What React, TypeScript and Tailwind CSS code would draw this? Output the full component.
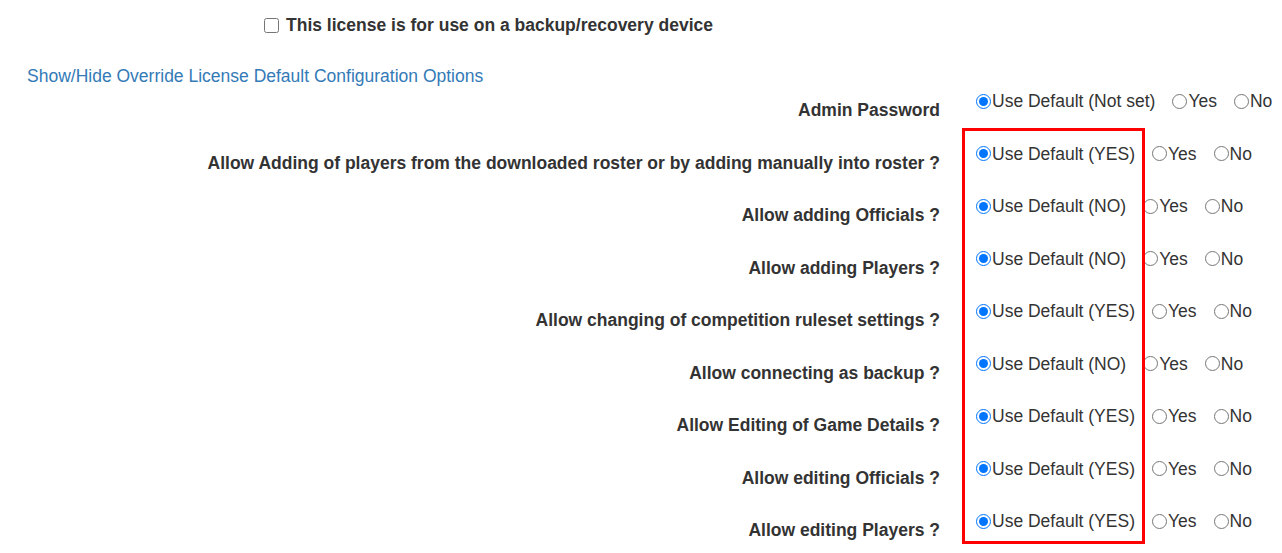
const rows: { label: string; def: string }[] = [
  { label: "Admin Password", def: "Not set" },
  { label: "Allow Adding of players from the downloaded roster or by adding manually into roster ?", def: "YES" },
  { label: "Allow adding Officials ?", def: "NO" },
  { label: "Allow adding Players ?", def: "NO" },
  { label: "Allow changing of competition ruleset settings ?", def: "YES" },
  { label: "Allow connecting as backup ?", def: "NO" },
  { label: "Allow Editing of Game Details ?", def: "YES" },
  { label: "Allow editing Officials ?", def: "YES" },
  { label: "Allow editing Players ?", def: "YES" },
];

function Radio({ name, checked, text }: { name: string; checked?: boolean; text: string }) {
  return (
    <label className="flex items-center">
      <input
        type="radio"
        name={name}
        defaultChecked={checked}
        className="m-0 mr-[1px] h-[15px] w-[15px]"
      />
      <span>{text}</span>
    </label>
  );
}

export default function App() {
  return (
    <div
      className="relative h-[553px] w-[1282px] overflow-hidden bg-white text-[17.5px] leading-[20px] text-[#333]"
      style={{ fontFamily: '"Liberation Sans", Arial, sans-serif' }}
    >
      <div className="flex items-center pl-[264px] pt-[15px]">
        <input type="checkbox" className="m-0 mr-[7px] h-[15px] w-[15px]" />
        <span className="font-bold">This license is for use on a backup/recovery device</span>
      </div>

      <div className="pl-[27px] pt-[31px]">
        <a href="#" className="text-[#337ab7]">
          Show/Hide Override License Default Configuration Options
        </a>
      </div>

      <div className="pt-[5px]">
        {rows.map((r, i) => (
          <div key={i} className="flex h-[52.5px] items-start">
            <div className="w-[940px] pt-[9px] text-right font-bold">{r.label}</div>
            <div className="flex gap-[17px] pl-[36px]">
              <Radio name={"r" + i} checked text={`Use Default (${r.def})`} />
              <Radio name={"r" + i} text="Yes" />
              <Radio name={"r" + i} text="No" />
            </div>
          </div>
        ))}
      </div>

      <div className="pointer-events-none absolute left-[962px] top-[128px] h-[416px] w-[183px] border-[3px] border-[#ff0000]" />
    </div>
  );
}
